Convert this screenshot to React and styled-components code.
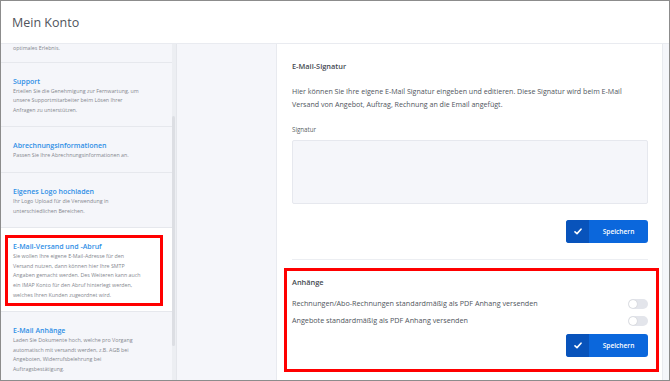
import React from 'react';
import styled, { createGlobalStyle } from 'styled-components';

const GlobalStyle = createGlobalStyle`
	html, body {
		margin: 0;
		padding: 0;
		background: #fff;
	}
	* {
		box-sizing: border-box;
	}
`;

const Frame = styled.div`
	width: 670px;
	height: 381px;
	border: 1px solid #8c8c8c;
	display: flex;
	flex-direction: column;
	overflow: hidden;
	background: #f5f6fa;
	font-family: 'Open Sans', 'Noto Sans', sans-serif;
`;

const Header = styled.div`
	height: 43px;
	flex: none;
	padding-left: 11px;
	display: flex;
	align-items: center;
	background: #fff;
	border-bottom: 1px solid #e9ebf0;

	h1 {
		margin: 0;
		font-size: 12.5px;
		font-weight: 400;
		color: #50545b;
	}
`;

const Body = styled.div`
	flex: 1;
	min-height: 0;
	display: flex;
`;

const Sidebar = styled.div`
	width: 176px;
	flex: none;
	display: flex;
	border-right: 1px solid #e4e6eb;
	overflow: hidden;
`;

const List = styled.div`
	flex: 1;
	display: flex;
	flex-direction: column;
`;

const ScrollTrack = styled.div`
	width: 4px;
	flex: none;
	background: #eceef2;
	padding-top: 72px;

	span {
		display: block;
		width: 3px;
		height: 230px;
		border-radius: 2px;
		background: #dcdee3;
	}
`;

const Item = styled.div`
	padding: ${(props) => (props.partial ? '0 12px 8px 12px' : '13px 12px 11px 12px')};
	background: ${(props) => (props.active ? '#fff' : 'transparent')};
	border-bottom: 1px solid #e6e8ed;
`;

const Highlight = styled.div`
	margin: -6px -3px -6px -8px;
	padding: 3px 12px 3px 5px;
	border: 3px solid #f00;
`;

const ItemTitle = styled.div`
	font-size: 7px;
	font-weight: 600;
	line-height: 11px;
	color: #2f8fe6;
`;

const ItemText = styled.div`
	font-size: 5.3px;
	line-height: 9.6px;
	color: #85888f;
	max-width: 128px;
`;

const Content = styled.div`
	flex: 1;
	display: flex;
	padding-left: 99px;
	padding-right: 6px;
`;

const Card = styled.div`
	flex: 1;
	background: #fff;
	border-left: 1px solid #e8eaef;
	border-right: 1px solid #e8eaef;
	padding: 17px 14px 0 15px;
	display: flex;
	flex-direction: column;
`;

const SectionTitle = styled.h2`
	margin: 0;
	font-size: 7.4px;
	font-weight: 600;
	line-height: 11px;
	color: #454a52;
`;

const Paragraph = styled.p`
	margin: 13px 0 0 0;
	font-size: 7.1px;
	line-height: 13px;
	color: #50555d;
`;

const Label = styled.div`
	margin-top: 14px;
	font-size: 6.2px;
	line-height: 9px;
	color: #5a5f66;
`;

const TextArea = styled.div`
	margin-top: 6px;
	height: 64px;
	background: #f5f6fa;
	border: 1px solid #e6e8ee;
	border-radius: 2px;
`;

const ButtonRow = styled.div`
	display: flex;
	justify-content: flex-end;
	margin-top: ${(props) => props.top || '16px'};
`;

const SaveButton = styled.button`
	width: 82px;
	height: 23px;
	padding: 0;
	border: none;
	border-radius: 3px;
	overflow: hidden;
	display: flex;
	background: #0b67dc;
	cursor: pointer;

	i {
		width: 23px;
		height: 100%;
		display: flex;
		align-items: center;
		justify-content: center;
		background: #0853bb;
	}

	span {
		flex: 1;
		display: flex;
		align-items: center;
		justify-content: center;
		font-family: 'Open Sans', 'Noto Sans', sans-serif;
		font-size: 6.6px;
		font-weight: 600;
		color: #fff;
	}
`;

const Divider = styled.div`
	margin-top: 16px;
	height: 1px;
	background: #eceef2;
`;

const Annotated = styled.div`
	margin: 8px -11px 0 -8px;
	padding: 6px 8px 12px 5px;
	border: 3px solid #f00;
`;

const ToggleRow = styled.div`
	display: flex;
	justify-content: space-between;
	align-items: center;
	height: 17px;
	line-height: 17px;
	margin-top: ${(props) => props.top || '0'};
	font-size: 7.2px;
	color: #50555d;
`;

const Toggle = styled.div`
	width: 20px;
	height: 10px;
	border-radius: 5px;
	background: #e3e5eb;
	position: relative;

	&::after {
		content: '';
		position: absolute;
		left: 1px;
		top: 1px;
		width: 8px;
		height: 8px;
		border-radius: 50%;
		background: #fff;
		box-shadow: 0 0 1px rgba(0, 0, 0, 0.25);
	}
`;

const Check = () => (
	<svg width="8" height="7" viewBox="0 0 8 7">
		<path d="M1 3.8 L3 5.6 L7 1.2" fill="none" stroke="#fff" strokeWidth="1.6" strokeLinecap="round" strokeLinejoin="round" />
	</svg>
);

const Save = () => (
	<SaveButton>
		<i><Check /></i>
		<span>Speichern</span>
	</SaveButton>
);

const items = [
	{ title: 'Support', text: 'Erteilen Sie die Genehmigung zur Fernwartung, um unsere Supportmitarbeiter beim Lösen Ihrer Anfragen zu unterstützen.' },
	{ title: 'Abrechnungsinformationen', text: 'Passen Sie Ihre Abrechnungsinformationen an.' },
	{ title: 'Eigenes Logo hochladen', text: 'Ihr Logo Upload für die Verwendung in unterschiedlichen Bereichen.' },
	{ title: 'E-Mail-Versand und -Abruf', text: 'Sie wollen Ihre eigene E-Mail-Adresse für den Versand nutzen, dann können hier Ihre SMTP Angaben gemacht werden. Des Weiteren kann auch ein IMAP Konto für den Abruf hinterlegt werden, welches Ihren Kunden zugeordnet wird.', active: true },
	{ title: 'E-Mail Anhänge', text: 'Laden Sie Dokumente hoch, welche pro Vorgang automatisch mit versandt werden, z.B. AGB bei Angeboten, Widerrufsbelehrung bei Auftragsbestätigung.' },
];

const App = () => (
	<>
		<GlobalStyle />
		<Frame>
			<Header>
				<h1>Mein Konto</h1>
			</Header>
			<Body>
				<Sidebar>
					<List>
						<Item partial>
							<ItemText>optimales Erlebnis.</ItemText>
						</Item>
						{items.map((item) => (
							<Item key={item.title} active={item.active}>
								{item.active ? (
									<Highlight>
										<ItemTitle>{item.title}</ItemTitle>
										<ItemText>{item.text}</ItemText>
									</Highlight>
								) : (
									<>
										<ItemTitle>{item.title}</ItemTitle>
										<ItemText>{item.text}</ItemText>
									</>
								)}
							</Item>
						))}
					</List>
					<ScrollTrack><span /></ScrollTrack>
				</Sidebar>
				<Content>
					<Card>
						<SectionTitle>E-Mail-Signatur</SectionTitle>
						<Paragraph>
							Hier können Sie Ihre eigene E-Mail Signatur eingeben und editieren. Diese Signatur wird beim E-Mail Versand von Angebot, Auftrag, Rechnung an die Email angefügt.
						</Paragraph>
						<Label>Signatur</Label>
						<TextArea />
						<ButtonRow>
							<Save />
						</ButtonRow>
						<Divider />
						<Annotated>
							<SectionTitle>Anhänge</SectionTitle>
							<ToggleRow top="7px">
								Rechnungen/Abo-Rechnungen standardmäßig als PDF Anhang versenden
								<Toggle />
							</ToggleRow>
							<ToggleRow>
								Angebote standardmäßig als PDF Anhang versenden
								<Toggle />
							</ToggleRow>
							<ButtonRow top="5px">
								<Save />
							</ButtonRow>
						</Annotated>
					</Card>
				</Content>
			</Body>
		</Frame>
	</>
);

export default App;
